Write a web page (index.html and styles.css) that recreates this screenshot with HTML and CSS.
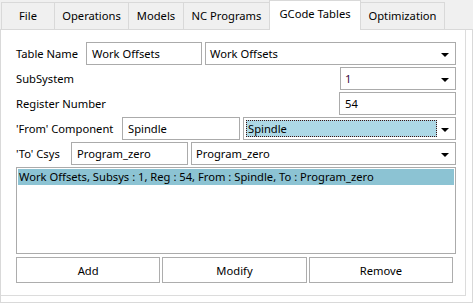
FILE: index.html
```html
<!DOCTYPE html>
<html lang="en">
<head>
  <meta charset="UTF-8" />
  <title>GCode Tables</title>
  <link rel="stylesheet" href="styles.css">
</head>
<body>

  <div class="tabs">
    <div class="tab t-file">File</div>
    <div class="tab t-ops">Operations</div>
    <div class="tab t-models">Models</div>
    <div class="tab t-nc">NC Programs</div>
    <div class="tab t-gcode active">GCode Tables</div>
    <div class="tab t-opt">Optimization</div>
  </div>

  <div class="panel">
    <div class="content">

      <!-- Table name -->
      <div class="row">
        <label class="lbl lbl-table">Table Name</label>
        <div class="field w-116">Work Offsets</div>
        <div class="combo grow">Work Offsets<span class="arrow"></span></div>
      </div>

      <!-- SubSystem -->
      <div class="row">
        <label class="lbl grow">SubSystem</label>
        <div class="combo w-116 sub">1<span class="arrow"></span></div>
      </div>

      <!-- Register -->
      <div class="row">
        <label class="lbl grow">Register Number</label>
        <div class="field w-117">54</div>
      </div>

      <!-- From component -->
      <div class="row">
        <label class="lbl lbl-from">'From' Component</label>
        <div class="field w-118">Spindle</div>
        <div class="combo grow focus"><span class="sel">Spindle</span><span class="arrow"></span></div>
      </div>

      <!-- To csys -->
      <div class="row">
        <label class="lbl lbl-to">'To' Csys</label>
        <div class="field w-117">Program_zero</div>
        <div class="combo grow">Program_zero<span class="arrow"></span></div>
      </div>

      <div class="list">
        <div class="item">Work Offsets, Subsys : 1, Reg : 54, From : Spindle, To : Program_zero</div>
      </div>

      <div class="buttons">
        <button>Add</button>
        <button>Modify</button>
        <button>Remove</button>
      </div>

    </div>
  </div>

</body>
</html>
```

FILE: styles.css
```css
* { margin: 0; padding: 0; box-sizing: border-box; }
body { font-family: 'Noto Sans', 'Segoe UI', sans-serif; font-size: 11.2px; color: #000; background: #f0f0f0; width: 473px; height: 303px; overflow: hidden; }

.tabs { display: flex; height: 29px; align-items: flex-end; padding-left: 1px; position: relative; z-index: 1; }
.tab { height: 27px; border: 1px solid #d9d9d9; border-bottom: none; margin-left: -1px; background: #f0f0f0; display: flex; align-items: center; justify-content: center; padding-bottom: 1px; }
.tab:first-child { margin-left: 0; }
.t-file { width: 54px; }
.t-ops { width: 75px; }
.t-models { width: 56px; }
.t-nc { width: 87px; }
.t-gcode { width: 92px; }
.t-opt { width: 85px; }
.tab.active { height: 30px; margin-bottom: -1px; background: #fff; padding-bottom: 4px; }

.panel { background: #fff; border: 1px solid #d9d9d9; height: 274px; }
.content { height: 266px; margin-right: 6px; border-right: 1px solid #dcdcdc; border-bottom: 1px solid #dcdcdc; padding: 12px 9px 0 15px; }

.row { display: flex; align-items: center; gap: 3px; height: 23px; margin-bottom: 2px; }
.lbl { white-space: nowrap; }
.lbl-table { width: 67px; }
.lbl-from { width: 103px; }
.lbl-to { width: 52px; }
.grow { flex: 1; }
.w-116 { width: 116px; }
.w-117 { width: 117px; }
.w-118 { width: 118px; }

.field, .combo { height: 23px; border: 1px solid #ababab; background: #fff; display: flex; align-items: center; padding-left: 5px; white-space: nowrap; }
.combo { position: relative; padding-left: 4px; }
.sub { color: #3c0a3c; }
.arrow { position: absolute; right: 6px; top: 10px; width: 0; height: 0; border-left: 4px solid transparent; border-right: 4px solid transparent; border-top: 4px solid #000; }
.combo.focus { padding: 2px 18px 2px 2px; }
.sel { display: flex; align-items: center; width: 100%; height: 100%; background: #add8e6; border: 1px dotted #3a1212; padding-left: 1px; }

.list { height: 87px; border: 1px solid #ababab; padding: 1px; margin-top: 0; }
.item { background: #8cc3d3; height: 16px; line-height: 15px; padding-left: 1px; white-space: nowrap; }

.buttons { display: flex; gap: 2px; margin-top: 3px; padding-right: 3px; }
button { flex: 1; height: 26px; border: 1px solid #adadad; background: #fff; font-family: inherit; font-size: inherit; color: #000; }
```
